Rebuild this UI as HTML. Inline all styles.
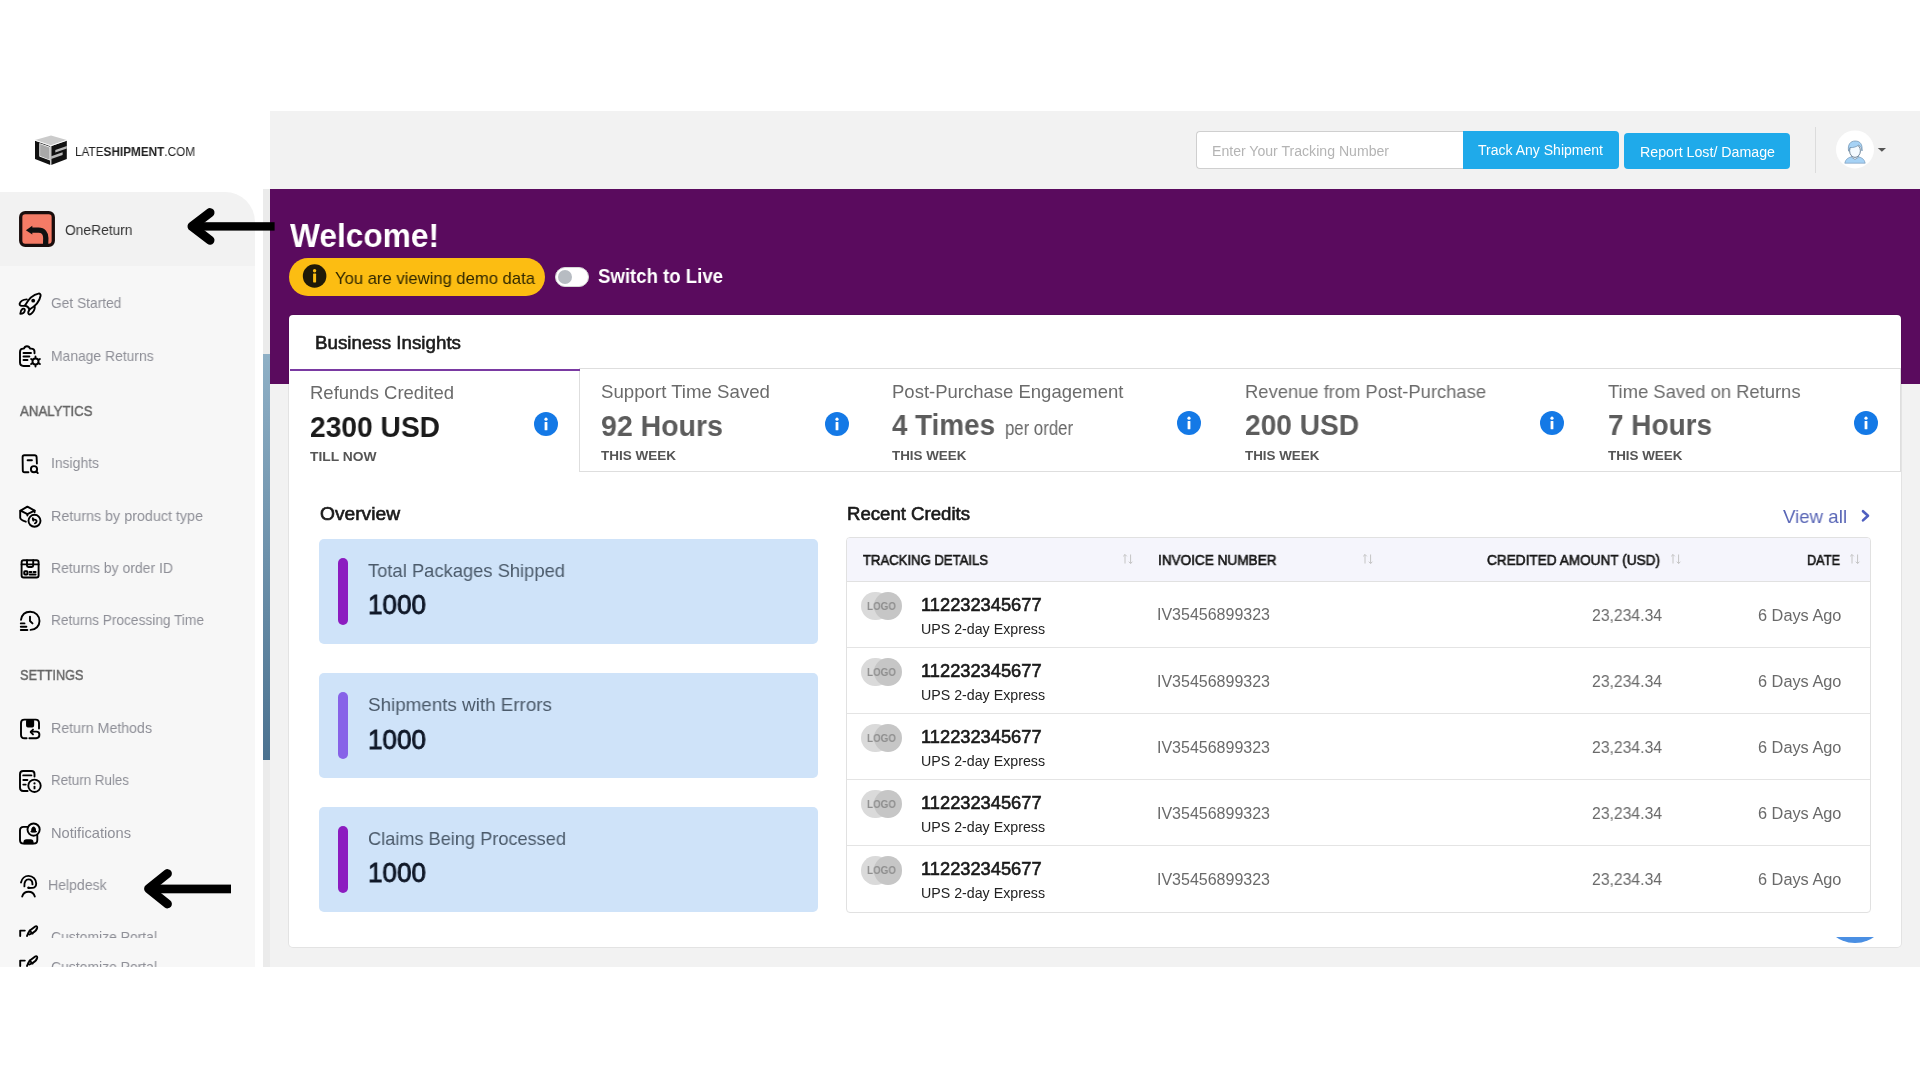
<!DOCTYPE html>
<html><head><meta charset="utf-8"><title>LateShipment OneReturn</title>
<style>
html,body{margin:0;padding:0;background:#fff;width:1920px;height:1080px;overflow:hidden;position:relative}
body{font-family:"Liberation Sans",sans-serif}
.abs{position:absolute}
.t{will-change:transform;position:absolute;white-space:nowrap;line-height:1.1171875;transform-origin:0 0}
.ic{fill:none;stroke:#000;stroke-width:1.9;stroke-linecap:round;stroke-linejoin:round}
</style></head><body>
<div class="abs" style="left:270px;top:111px;width:1650px;height:856px;background:#f2f2f2"></div><div class="abs" style="left:270px;top:189px;width:1650px;height:195px;background:#5a0b5e"></div><div class="abs" style="left:0;top:266px;width:255px;height:701px;background:#f7f7f7"></div><div class="abs" style="left:0;top:192px;width:255px;height:74px;background:#f2f2f2;border-top-right-radius:30px"></div><div class="abs" style="left:263px;top:189px;width:7px;height:778px;background:#ebebeb"></div><div class="abs" style="left:263px;top:354px;width:7px;height:406px;background:linear-gradient(#8fb0c6,#4b7290)"></div><svg class="abs" style="left:30px;top:132px" width="42" height="36" viewBox="30 132 42 36">
<polygon points="35,140 51,135.5 66.8,140 51,145.5" fill="#cbcbcb"/>
<polygon points="35,140.6 50.4,146 50.4,165 35,159" fill="#111"/>
<polygon points="51.2,146 66.8,140.6 66.8,159 51.2,165" fill="#111"/>
<polygon points="39.3,143 50,146.8 50,160.6 39.3,156.6" fill="#fff"/>
<polygon points="40.1,144 49.6,147.4 49.6,159.8 40.1,156" fill="#a8a8a8"/>
<polygon points="55.3,150 66.8,146 66.8,148.6 55.3,152.6" fill="#b8b8b8"/>
<polygon points="51.2,156.3 62.6,152.3 62.6,154.9 51.2,158.9" fill="#b8b8b8"/>
<line x1="35" y1="140.3" x2="50.8" y2="145.8" stroke="#fff" stroke-width="0.9"/>
<line x1="50.8" y1="145.8" x2="66.8" y2="140.3" stroke="#fff" stroke-width="0.9"/>
<line x1="50.8" y1="145.8" x2="50.8" y2="165" stroke="#ddd" stroke-width="0.9"/>
</svg><div class="t" id="t0" style="left:74.70px;top:146.00px;font-size:12.5px;color:#222;font-weight:400;transform:scaleX(0.9406);">LATE<b style="font-weight:700">SHIPMENT</b>.COM</div>
<svg class="abs" style="left:16px;top:208px" width="42" height="42" viewBox="16 208 42 42">
<rect x="20.7" y="212.7" width="32.6" height="32.6" rx="4.5" fill="#f57b66" stroke="#1a0d0d" stroke-width="3.3"/>
<path d="M32.3,225.8 L25.9,230.2 L32.3,234.6 Z" fill="#111"/>
<path d="M31.5,230.2 L38.5,230.2 C43.5,230.2 45.8,233.5 45.8,238 L45.6,245" fill="none" stroke="#111" stroke-width="5.3"/>
</svg><div class="t" id="t1" style="left:65.00px;top:222.00px;font-size:14.5px;color:#333;font-weight:400;transform:scaleX(0.9515);">OneReturn</div>
<svg class="abs" style="left:170px;top:200px" width="110" height="60" viewBox="170 200 110 60">
<polyline points="210,212.6 192,226.4 210,240.2" fill="none" stroke="#000" stroke-width="9" stroke-linecap="round" stroke-linejoin="round"/>
<rect x="192" y="222.2" width="82.6" height="8.4" fill="#000"/>
</svg><svg class="abs" style="left:130px;top:860px" width="110" height="60" viewBox="130 860 110 60">
<polyline points="167.5,873.5 148.5,888.8 167.5,904" fill="none" stroke="#000" stroke-width="8.8" stroke-linecap="round" stroke-linejoin="round"/>
<rect x="148" y="884.6" width="83" height="8.7" fill="#000"/>
</svg><svg class="abs ic" style="left:14px;top:288px" width="32" height="32" viewBox="0 0 32 32"><path d="M11,17.5 C14,12 19,6.5 24.5,5.6 C26,5.4 26.8,6.3 26.6,7.8 C25.5,13.5 21,18.5 15.5,21.5 C14.8,19.5 13,18 11,17.5 Z"/>
<path d="M12.8,11.4 C9.2,11.6 6.3,13.6 5.6,15.8 C5.3,17.3 6.8,18.2 11,17.8"/>
<path d="M20.8,19 C20.8,22 19,24.6 16.6,26.2 C15.2,26.9 13.8,25.6 14.3,24 L15.5,21.5"/>
<path d="M6.3,25.8 C6.5,23.5 7.4,21.6 8.5,20.9 C9.8,20.2 11,21 10.8,22.6 C10.4,24.6 8.5,25.8 6.3,25.8 Z"/>
<circle cx="19.2" cy="12.7" r="1.9" fill="#000" stroke="none"/></svg>
<div class="t" id="t2" style="left:50.80px;top:295.00px;font-size:14.5px;color:#8e8f97;font-weight:400;transform:scaleX(0.9493);">Get Started</div>
<svg class="abs ic" style="left:14px;top:340px" width="32" height="32" viewBox="0 0 32 32"><path d="M20.5,13.3 L20.5,11.6 C20.5,9.8 19,8.6 17.2,8.6 L16,8.6 C15.5,6.9 14.3,6.3 13,6.3 C11.7,6.3 10.5,6.9 10,8.6 L9.2,8.6 C7.3,8.6 6,10 6,12 L6,22.6 C6,24.8 7.4,26 9.5,26 L15.4,26"/>
<path d="M9.5,13 L17,13 M9.5,16.5 L15.4,16.5 M9.5,20 L13.5,20"/>
<path d="M21.5,16.5 L21.5,17.6 M21.5,25.4 L21.5,26.5 M17.1,19 L18.1,19.6 M24.9,23.4 L25.9,24 M17.1,24 L18.1,23.4 M24.9,19.6 L25.9,19"/>
<circle cx="21.5" cy="21.5" r="3"/></svg>
<div class="t" id="t3" style="left:51.00px;top:348.00px;font-size:14.5px;color:#8e8f97;font-weight:400;transform:scaleX(0.9571);">Manage Returns</div>
<div class="t" id="t4" style="left:19.70px;top:403.00px;font-size:14.5px;color:#666;font-weight:400;-webkit-text-stroke:0.45px #666;transform:scaleX(0.9130);">ANALYTICS</div>
<svg class="abs ic" style="left:14px;top:447px" width="32" height="32" viewBox="0 0 32 32"><path d="M22.9,16.5 L22.6,10 C22.5,8.9 21.7,8.3 20.6,8.3 L10.3,8.3 C9.3,8.3 8.6,9 8.6,10 L8.8,23.4 C8.8,24.5 9.5,25.2 10.6,25.2 L14.4,25.3"/>
<path d="M13.6,13.3 L17.9,13.3"/>
<circle cx="20" cy="22.2" r="3.1"/>
<path d="M22.3,24.5 L23.8,26.1"/></svg>
<div class="t" id="t5" style="left:51.00px;top:455.00px;font-size:14.5px;color:#8e8f97;font-weight:400;transform:scaleX(0.9603);">Insights</div>
<svg class="abs ic" style="left:14px;top:500px" width="32" height="32" viewBox="0 0 32 32"><path d="M6.6,10.6 L13.4,6.6 L20.6,10.6 L13.4,14.2 Z"/>
<path d="M6.2,10.8 L6.2,17.8 C6.2,19.5 7.5,20.3 11.8,21.7 M13.4,14.2 L13.4,15.6 M20.6,10.8 L20.6,12.3"/>
<circle cx="20.5" cy="20.8" r="6"/>
<path d="M19.4,19.4 L21.6,19.9 C23,20.4 23,22.7 20.9,23.3" />
<path d="M18.8,18.2 L19.3,20.6" /></svg>
<div class="t" id="t6" style="left:51.00px;top:508.00px;font-size:14.5px;color:#8e8f97;font-weight:400;transform:scaleX(0.9873);">Returns by product type</div>
<svg class="abs ic" style="left:14px;top:552px" width="32" height="32" viewBox="0 0 32 32"><rect x="7.6" y="8.2" width="17" height="17.3" rx="2"/>
<path d="M7.6,12.4 L24.6,12.4"/>
<path d="M13,8.2 L13,13.6 C13,14.6 13.6,15 14.4,15 L17.8,15 C18.6,15 19.2,14.6 19.2,13.6 L19.2,8.2"/>
<rect x="10.2" y="19.2" width="3.3" height="3.3" rx="0.8"/>
<path d="M15.6,20 L17.4,20 M19.6,20 L21.6,20 M15.6,22.5 L21.6,22.5"/></svg>
<div class="t" id="t7" style="left:51.00px;top:560.00px;font-size:14.5px;color:#8e8f97;font-weight:400;transform:scaleX(0.9642);">Returns by order ID</div>
<svg class="abs ic" style="left:14px;top:604px" width="32" height="32" viewBox="0 0 32 32"><path d="M7,15.8 C7.8,10.7 11.4,7.7 16.2,7.7 C21.5,7.7 25.5,11.7 25.5,17 C25.5,22 21.8,25.6 16.6,25.9"/>
<path d="M16,12.6 L16,17 L18.5,19.4"/>
<path d="M6.8,19.4 L10.5,19.4 M6.8,22.7 L12.4,22.7 M6.8,26 L13.4,26"/></svg>
<div class="t" id="t8" style="left:51.00px;top:612.00px;font-size:14.5px;color:#8e8f97;font-weight:400;transform:scaleX(0.9445);">Returns Processing Time</div>
<div class="t" id="t9" style="left:19.60px;top:667.00px;font-size:14.5px;color:#666;font-weight:400;-webkit-text-stroke:0.45px #666;transform:scaleX(0.8757);">SETTINGS</div>
<svg class="abs ic" style="left:14px;top:712px" width="32" height="32" viewBox="0 0 32 32"><path d="M25,16.5 L25,11 C25,8.9 23.7,7.6 21.8,7.6 L10.4,7.6 C8.4,7.6 7,9 7,11 L7,22.7 C7,24.8 8.4,26.2 10.4,26.2 L12.6,26.2"/>
<rect x="13" y="8.2" width="6.2" height="6.3" rx="0.9" fill="#000"/>
<path d="M15.4,26.2 L22.2,26.2 C24.2,26.2 25.4,24.8 25.4,22.8 C25.4,20.9 24.1,19.6 22.3,19.6 L17,19.6"/>
<path d="M19,17.6 L16.7,20 L19,22.4"/></svg>
<div class="t" id="t10" style="left:51.00px;top:720.00px;font-size:14.5px;color:#8e8f97;font-weight:400;transform:scaleX(0.9789);">Return Methods</div>
<svg class="abs ic" style="left:14px;top:764px" width="32" height="32" viewBox="0 0 32 32"><path d="M20.5,12.6 L20.5,10 C20.5,8.2 19.3,7 17.5,7 L9.2,7 C7.3,7 6,8.3 6,10.2 L6,23.8 C6,25.8 7.3,27 9.2,27 L13.6,27"/>
<path d="M9.2,11.4 L17.4,11.4 M9.3,16 L13.4,16 M9.3,20.6 L11.7,20.6"/>
<circle cx="20.5" cy="21.8" r="6.2"/>
<path d="M20.5,22.6 L20.5,24.4"/>
<circle cx="20.5" cy="19.4" r="1.1" fill="#000" stroke="none"/></svg>
<div class="t" id="t11" style="left:51.00px;top:772.00px;font-size:14.5px;color:#8e8f97;font-weight:400;transform:scaleX(0.9217);">Return Rules</div>
<svg class="abs ic" style="left:14px;top:816px" width="32" height="32" viewBox="0 0 32 32"><path d="M13.6,10.9 L9.6,10.9 C7.5,10.9 6,12.4 6,14.5 L6,23.9 C6,26 7.5,27.5 9.6,27.5 L19.8,27.5 C21.8,27.5 23.3,26 23.3,23.9 L23.3,19.6"/>
<circle cx="19.6" cy="13.6" r="6.1"/>
<path d="M17.6,15.6 L17.9,12.8 C18,11.6 18.8,11 19.6,11 C20.4,11 21.2,11.6 21.3,12.8 L21.6,15.6 Z" fill="#000" stroke-width="1"/>
<path d="M17,15.6 L22.4,15.6" stroke-width="1.2"/>
<path d="M10.4,27.4 L10.4,26.2 C10.4,25 11.3,24.2 12.5,24.2 L16.5,24.2 C17.6,24.2 18.6,25 18.6,26.2 L18.6,27.4 Z" fill="#000"/></svg>
<div class="t" id="t12" style="left:51.00px;top:825.00px;font-size:14.5px;color:#8e8f97;font-weight:400;transform:scaleX(1.0129);">Notifications</div>
<svg class="abs ic" style="left:14px;top:869px" width="32" height="32" viewBox="0 0 32 32"><path d="M7,13.5 C7.8,9.4 11,6.9 14.5,6.9 C18.9,6.9 22.2,10.4 22.2,14.6 C22.2,17 20.6,18.9 18.4,18.9 L14.4,19"/>
<path d="M10.4,17.4 C10,13.2 11.8,10.4 14.5,10.4 C17,10.4 18.5,12.4 18.5,15.4"/>
<circle cx="14.6" cy="18.6" r="1.2" fill="#000" stroke="none"/>
<path d="M8.2,27.6 C9.1,24.6 11.5,22.8 14.5,22.8 C17.5,22.8 19.9,24.6 20.8,27.6"/></svg>
<div class="t" id="t13" style="left:48.20px;top:877.00px;font-size:14.5px;color:#8e8f97;font-weight:400;transform:scaleX(0.9693);">Helpdesk</div>
<div class="abs" style="left:0;top:920px;width:255px;height:17.5px;overflow:hidden"><svg class="abs ic" style="left:14px;top:-2px" width="32" height="32" viewBox="0 0 32 32"><path d="M6.2,18 L6.2,12.6 L10.8,12.6"/><path d="M13,18 C13.5,15.5 15,13.5 16.5,12 L21.2,8.5 C22.2,7.8 23.4,8.4 23.2,9.7 C22.8,11.5 21,13.6 18.8,14.8 L15.5,16.5"/><path d="M15.6,12.6 L18.6,15.6"/></svg><div class="t" id="t14" style="left:50.80px;top:9.00px;font-size:14.5px;color:#8e8f97;font-weight:400;transform:scaleX(0.9601);">Customize Portal</div>
</div><div class="abs" style="left:0;top:950px;width:255px;height:17px;overflow:hidden"><svg class="abs ic" style="left:14px;top:-2.5px" width="32" height="32" viewBox="0 0 32 32"><path d="M6.2,18 L6.2,12.6 L10.8,12.6"/><path d="M13,18 C13.5,15.5 15,13.5 16.5,12 L21.2,8.5 C22.2,7.8 23.4,8.4 23.2,9.7 C22.8,11.5 21,13.6 18.8,14.8 L15.5,16.5"/><path d="M15.6,12.6 L18.6,15.6"/></svg><div class="t" id="t15" style="left:50.80px;top:9.00px;font-size:14.5px;color:#8e8f97;font-weight:400;transform:scaleX(0.9601);">Customize Portal</div>
</div><div class="abs" style="left:1196px;top:131px;width:267px;height:38px;background:#fff;border:1px solid #cfcfcf;border-right:none;border-radius:4px 0 0 4px;box-sizing:border-box"></div><div class="t" id="t16" style="left:1212.40px;top:144.00px;font-size:14px;color:#b4b4b4;font-weight:400;transform:scaleX(1.0064);">Enter Your Tracking Number</div>
<div class="abs" style="left:1463px;top:131px;width:155.5px;height:37.5px;background:#1faaea;border-radius:0 4px 4px 0"></div><div class="t" id="t17" style="left:1478.40px;top:143.00px;font-size:14px;color:#fff;font-weight:400;transform:scaleX(1.0019);">Track Any Shipment</div>
<div class="abs" style="left:1624px;top:133px;width:166px;height:35.5px;background:#1faaea;border-radius:4px"></div><div class="t" id="t18" style="left:1640.00px;top:145.00px;font-size:14px;color:#fff;font-weight:400;transform:scaleX(1.0144);">Report Lost/ Damage</div>
<div class="abs" style="left:1815px;top:127px;width:1px;height:46px;background:#dcdcdc"></div><svg class="abs" style="left:1830px;top:124px" width="64" height="52" viewBox="1830 124 64 52">
<circle cx="1855" cy="149.4" r="19" fill="#fff"/>
<path d="M1844.8,163.2 C1845.4,159.4 1848,157.6 1851.6,156.8 L1855,159 L1858.4,156.8 C1862,157.6 1864.6,159.4 1865.2,163.2 Z" fill="#a6d2f5" stroke="#7f9fbd" stroke-width="0.7" stroke-linejoin="round"/>
<path d="M1851.6,155.6 L1851.8,157.4 L1855,159.4 L1858.2,157.4 L1858.4,155.6" fill="#f4faff" stroke="#5f7a95" stroke-width="0.6"/>
<ellipse cx="1855" cy="150.8" rx="5.4" ry="6.6" fill="#f4faff" stroke="#4f6880" stroke-width="0.8"/>
<path d="M1848.6,151.2 C1847.4,144.6 1850.4,141 1855.2,141 C1860,141 1862.8,144.2 1862,151 C1861.6,148 1860.6,146.2 1858.8,145 C1856.6,146.8 1853.2,147.8 1849.8,147.6 Z" fill="#a6d2f5" stroke="#6e8fae" stroke-width="0.7" stroke-linejoin="round"/>
<polygon points="1877.8,148 1886,148 1881.9,151.8" fill="#555"/>
</svg><div class="t" id="t19" style="left:290.00px;top:216.00px;font-size:34px;color:#fff;font-weight:700;transform:scaleX(0.9313);">Welcome!</div>
<div class="abs" style="left:289px;top:257.6px;width:256px;height:38.7px;background:#fcbd12;border-radius:20px"></div><svg class="abs" style="left:302px;top:264px" width="26" height="26" viewBox="0 0 26 26">
<circle cx="12.6" cy="12" r="11.8" fill="#1f1a08"/>
<circle cx="12.6" cy="6.8" r="1.7" fill="#fcbd12"/>
<rect x="11.1" y="9.6" width="3" height="8.8" rx="0.6" fill="#fcbd12"/>
</svg><div class="t" id="t20" style="left:334.70px;top:269.00px;font-size:17px;color:#2f2700;font-weight:400;transform:scaleX(0.9781);">You are viewing demo data</div>
<div class="abs" style="left:555px;top:267px;width:33.5px;height:19.7px;background:#fff;border-radius:10px;box-sizing:border-box;border:1px solid #d6d6d6"></div><div class="abs" style="left:557.5px;top:269.5px;width:14.5px;height:14.5px;background:#b7bcc2;border-radius:50%"></div><div class="t" id="t21" style="left:598.00px;top:266.00px;font-size:19.5px;color:#fff;font-weight:700;transform:scaleX(0.9534);">Switch to Live</div>
<div class="abs" style="left:289px;top:315px;width:1612px;height:632px;background:#fff;border-radius:4px;box-shadow:0 0 0 1px rgba(0,0,0,0.06)"></div><div class="t" id="t22" style="left:315.40px;top:333.00px;font-size:18.5px;color:#1c1c1c;font-weight:400;-webkit-text-stroke:0.6px #1c1c1c;transform:scaleX(1.0141);">Business Insights</div>
<div class="abs" style="left:579px;top:368px;width:1322px;height:104px;border:1px solid #dedede;border-right:1px solid #dedede;box-sizing:border-box"></div><div class="abs" style="left:290px;top:368.5px;width:289.5px;height:2.5px;background:#7a3aa2"></div><div class="t" id="t23" style="left:310.40px;top:383.00px;font-size:18.5px;color:#6b6b6b;font-weight:400;transform:scaleX(1.0001);">Refunds Credited</div>
<div class="t" id="t24" style="left:310.40px;top:411.00px;font-size:29.5px;color:#1a1a1a;font-weight:700;transform:scaleX(0.9551);">2300 USD</div>
<div class="t" id="t25" style="left:310.40px;top:450.00px;font-size:13.4px;color:#555;font-weight:700;transform:scaleX(1.0315);">TILL NOW</div>
<svg class="abs" style="left:533.2px;top:411.4px" width="26" height="26" viewBox="0 0 26 26">
<circle cx="13" cy="13" r="12" fill="#1479e6"/><circle cx="13" cy="8.2" r="1.6" fill="#fff"/><rect x="11.6" y="11" width="2.8" height="8.2" rx="0.5" fill="#fff"/></svg><div class="t" id="t26" style="left:601.20px;top:382.00px;font-size:18.5px;color:#6b6b6b;font-weight:400;transform:scaleX(1.0082);">Support Time Saved</div>
<div class="t" id="t27" style="left:601.20px;top:410.00px;font-size:29.5px;color:#5c5c5c;font-weight:700;transform:scaleX(0.9663);">92 Hours</div>
<div class="t" id="t28" style="left:601.20px;top:449.00px;font-size:13.4px;color:#555;font-weight:700;transform:scaleX(1.0080);">THIS WEEK</div>
<svg class="abs" style="left:824px;top:410.5px" width="26" height="26" viewBox="0 0 26 26">
<circle cx="13" cy="13" r="12" fill="#1479e6"/><circle cx="13" cy="8.2" r="1.6" fill="#fff"/><rect x="11.6" y="11" width="2.8" height="8.2" rx="0.5" fill="#fff"/></svg><div class="t" id="t29" style="left:892.00px;top:382.00px;font-size:18.5px;color:#6b6b6b;font-weight:400;transform:scaleX(0.9983);">Post-Purchase Engagement</div>
<div class="t" id="t30" style="left:892.00px;top:409.00px;font-size:29.5px;color:#5c5c5c;font-weight:700;transform:scaleX(0.9420);">4 Times</div>
<div class="t" id="t31" style="left:892.00px;top:449.00px;font-size:13.4px;color:#555;font-weight:700;transform:scaleX(0.9999);">THIS WEEK</div>
<svg class="abs" style="left:1176px;top:410.3px" width="26" height="26" viewBox="0 0 26 26">
<circle cx="13" cy="13" r="12" fill="#1479e6"/><circle cx="13" cy="8.2" r="1.6" fill="#fff"/><rect x="11.6" y="11" width="2.8" height="8.2" rx="0.5" fill="#fff"/></svg><div class="t" id="t32" style="left:1244.80px;top:382.00px;font-size:18.5px;color:#6b6b6b;font-weight:400;transform:scaleX(0.9931);">Revenue from Post-Purchase</div>
<div class="t" id="t33" style="left:1244.80px;top:409.00px;font-size:29.5px;color:#5c5c5c;font-weight:700;transform:scaleX(0.9524);">200 USD</div>
<div class="t" id="t34" style="left:1244.80px;top:449.00px;font-size:13.4px;color:#555;font-weight:700;transform:scaleX(0.9999);">THIS WEEK</div>
<svg class="abs" style="left:1539px;top:410.3px" width="26" height="26" viewBox="0 0 26 26">
<circle cx="13" cy="13" r="12" fill="#1479e6"/><circle cx="13" cy="8.2" r="1.6" fill="#fff"/><rect x="11.6" y="11" width="2.8" height="8.2" rx="0.5" fill="#fff"/></svg><div class="t" id="t35" style="left:1607.50px;top:382.00px;font-size:18.5px;color:#6b6b6b;font-weight:400;transform:scaleX(0.9940);">Time Saved on Returns</div>
<div class="t" id="t36" style="left:1607.50px;top:409.00px;font-size:29.5px;color:#5c5c5c;font-weight:700;transform:scaleX(0.9468);">7 Hours</div>
<div class="t" id="t37" style="left:1607.50px;top:449.00px;font-size:13.4px;color:#555;font-weight:700;transform:scaleX(0.9999);">THIS WEEK</div>
<svg class="abs" style="left:1853px;top:410.3px" width="26" height="26" viewBox="0 0 26 26">
<circle cx="13" cy="13" r="12" fill="#1479e6"/><circle cx="13" cy="8.2" r="1.6" fill="#fff"/><rect x="11.6" y="11" width="2.8" height="8.2" rx="0.5" fill="#fff"/></svg><div class="t" id="t38" style="left:1004.80px;top:418.00px;font-size:19.5px;color:#666;font-weight:400;transform:scaleX(0.8594);">per order</div>
<div class="t" id="t39" style="left:319.60px;top:505.00px;font-size:17.5px;color:#1a1a1a;font-weight:400;-webkit-text-stroke:0.6px #1a1a1a;transform:scaleX(1.0968);">Overview</div>
<div class="abs" style="left:319px;top:539px;width:498.5px;height:104.5px;background:#cfe3f9;border-radius:5px"></div><div class="abs" style="left:338px;top:558px;width:10.3px;height:66.6px;background:#8c1cc0;border-radius:6px"></div><div class="t" id="t40" style="left:367.80px;top:560.00px;font-size:19px;color:#4b5a6a;font-weight:400;transform:scaleX(0.9663);">Total Packages Shipped</div>
<div class="t" id="t41" style="left:367.80px;top:589.00px;font-size:28.5px;color:#101828;font-weight:400;-webkit-text-stroke:0.9px #101828;transform:scaleX(0.9147);">1000</div>
<div class="abs" style="left:319px;top:673.3px;width:498.5px;height:104.5px;background:#cfe3f9;border-radius:5px"></div><div class="abs" style="left:338px;top:692.3px;width:10.3px;height:66.6px;background:#8762e8;border-radius:6px"></div><div class="t" id="t42" style="left:367.80px;top:694.00px;font-size:19px;color:#4b5a6a;font-weight:400;transform:scaleX(0.9901);">Shipments with Errors</div>
<div class="t" id="t43" style="left:367.80px;top:724.00px;font-size:28.5px;color:#101828;font-weight:400;-webkit-text-stroke:0.9px #101828;transform:scaleX(0.9147);">1000</div>
<div class="abs" style="left:319px;top:807.2px;width:498.5px;height:104.5px;background:#cfe3f9;border-radius:5px"></div><div class="abs" style="left:338px;top:826.2px;width:10.3px;height:66.6px;background:#8c1cc0;border-radius:6px"></div><div class="t" id="t44" style="left:367.80px;top:828.00px;font-size:19px;color:#4b5a6a;font-weight:400;transform:scaleX(0.9566);">Claims Being Processed</div>
<div class="t" id="t45" style="left:367.80px;top:857.00px;font-size:28.5px;color:#101828;font-weight:400;-webkit-text-stroke:0.9px #101828;transform:scaleX(0.9147);">1000</div>
<div class="t" id="t46" style="left:847.40px;top:505.00px;font-size:17.5px;color:#1a1a1a;font-weight:400;-webkit-text-stroke:0.6px #1a1a1a;transform:scaleX(1.0626);">Recent Credits</div>
<div class="t" id="t47" style="left:1782.50px;top:506.00px;font-size:19px;color:#5966b6;font-weight:400;transform:scaleX(0.9825);">View all</div>
<svg class="abs" style="left:1858px;top:506px" width="16" height="20" viewBox="0 0 16 20"><polyline points="5,5.2 10,9.8 5,14.4" fill="none" stroke="#4f5fc0" stroke-width="2.6" stroke-linecap="round" stroke-linejoin="round"/></svg><div class="abs" style="left:846px;top:537px;width:1025px;height:376px;border:1px solid #e1e1e1;border-radius:4px;box-sizing:border-box;overflow:hidden"><div class="abs" style="left:0;top:0;width:1025px;height:44px;background:#f5f5fc;border-bottom:1px solid #e1e1e1;box-sizing:border-box"></div></div><div class="t" id="t48" style="left:863.00px;top:553.00px;font-size:14px;color:#161616;font-weight:400;-webkit-text-stroke:0.6px #161616;transform:scaleX(0.9360);">TRACKING DETAILS</div>
<svg class="abs" style="left:1121.5px;top:553px" width="12" height="12" viewBox="0 0 12 12"><path d="M3,10.5 L3,1.5 M1.2,3.3 L3,1.5 L4.8,3.3 M8.6,1.5 L8.6,10.5 M6.8,8.7 L8.6,10.5 L10.4,8.7" fill="none" stroke="#c4c4c4" stroke-width="1"/></svg><div class="t" id="t49" style="left:1157.60px;top:553.00px;font-size:14px;color:#161616;font-weight:400;-webkit-text-stroke:0.6px #161616;transform:scaleX(0.9703);">INVOICE NUMBER</div>
<svg class="abs" style="left:1361.5px;top:553px" width="12" height="12" viewBox="0 0 12 12"><path d="M3,10.5 L3,1.5 M1.2,3.3 L3,1.5 L4.8,3.3 M8.6,1.5 L8.6,10.5 M6.8,8.7 L8.6,10.5 L10.4,8.7" fill="none" stroke="#c4c4c4" stroke-width="1"/></svg><div class="t" id="t50" style="left:1487.00px;top:553.00px;font-size:14px;color:#161616;font-weight:400;-webkit-text-stroke:0.6px #161616;transform:scaleX(0.9727);">CREDITED AMOUNT (USD)</div>
<svg class="abs" style="left:1670px;top:553px" width="12" height="12" viewBox="0 0 12 12"><path d="M3,10.5 L3,1.5 M1.2,3.3 L3,1.5 L4.8,3.3 M8.6,1.5 L8.6,10.5 M6.8,8.7 L8.6,10.5 L10.4,8.7" fill="none" stroke="#c4c4c4" stroke-width="1"/></svg><div class="t" id="t51" style="left:1806.50px;top:553.00px;font-size:14px;color:#161616;font-weight:400;-webkit-text-stroke:0.6px #161616;transform:scaleX(0.9088);">DATE</div>
<svg class="abs" style="left:1849px;top:553px" width="12" height="12" viewBox="0 0 12 12"><path d="M3,10.5 L3,1.5 M1.2,3.3 L3,1.5 L4.8,3.3 M8.6,1.5 L8.6,10.5 M6.8,8.7 L8.6,10.5 L10.4,8.7" fill="none" stroke="#c4c4c4" stroke-width="1"/></svg><div class="abs" style="left:847px;top:646.9px;width:1023px;height:1px;background:#e4e4e4"></div><div class="abs" style="left:861px;top:591.6px;width:28.5px;height:28.5px;border-radius:50%;background:#dadada"></div><div class="abs" style="left:873.5px;top:591.6px;width:28.5px;height:28.5px;border-radius:50%;background:#c6c6c6"></div><div class="t" id="t52" style="left:866.50px;top:601.00px;font-size:10.5px;color:#8f8f8f;font-weight:700;transform:scaleX(0.9378);">LOGO</div>
<div class="t" id="t53" style="left:921.10px;top:596.00px;font-size:17.5px;color:#1a1a1a;font-weight:400;-webkit-text-stroke:0.6px #1a1a1a;transform:scaleX(1.0442);">112232345677</div>
<div class="t" id="t54" style="left:921.10px;top:622.00px;font-size:14.2px;color:#222;font-weight:400;transform:scaleX(1.0016);">UPS 2-day Express</div>
<div class="t" id="t55" style="left:1157.20px;top:606.00px;font-size:16px;color:#6a6a6a;font-weight:400;transform:scaleX(1.0000);">IV35456899323</div>
<div class="t" id="t56" style="left:1591.60px;top:607.00px;font-size:16px;color:#6a6a6a;font-weight:400;transform:scaleX(0.9833);">23,234.34</div>
<div class="t" id="t57" style="left:1757.60px;top:607.00px;font-size:16px;color:#6a6a6a;font-weight:400;transform:scaleX(1.0192);">6 Days Ago</div>
<div class="abs" style="left:847px;top:713.0px;width:1023px;height:1px;background:#e4e4e4"></div><div class="abs" style="left:861px;top:657.7px;width:28.5px;height:28.5px;border-radius:50%;background:#dadada"></div><div class="abs" style="left:873.5px;top:657.7px;width:28.5px;height:28.5px;border-radius:50%;background:#c6c6c6"></div><div class="t" id="t58" style="left:866.50px;top:667.00px;font-size:10.5px;color:#8f8f8f;font-weight:700;transform:scaleX(0.9378);">LOGO</div>
<div class="t" id="t59" style="left:921.10px;top:662.00px;font-size:17.5px;color:#1a1a1a;font-weight:400;-webkit-text-stroke:0.6px #1a1a1a;transform:scaleX(1.0442);">112232345677</div>
<div class="t" id="t60" style="left:921.10px;top:688.00px;font-size:14.2px;color:#222;font-weight:400;transform:scaleX(1.0016);">UPS 2-day Express</div>
<div class="t" id="t61" style="left:1157.20px;top:673.00px;font-size:16px;color:#6a6a6a;font-weight:400;transform:scaleX(1.0000);">IV35456899323</div>
<div class="t" id="t62" style="left:1591.60px;top:673.00px;font-size:16px;color:#6a6a6a;font-weight:400;transform:scaleX(0.9833);">23,234.34</div>
<div class="t" id="t63" style="left:1757.60px;top:673.00px;font-size:16px;color:#6a6a6a;font-weight:400;transform:scaleX(1.0192);">6 Days Ago</div>
<div class="abs" style="left:847px;top:779.1px;width:1023px;height:1px;background:#e4e4e4"></div><div class="abs" style="left:861px;top:723.8px;width:28.5px;height:28.5px;border-radius:50%;background:#dadada"></div><div class="abs" style="left:873.5px;top:723.8px;width:28.5px;height:28.5px;border-radius:50%;background:#c6c6c6"></div><div class="t" id="t64" style="left:866.50px;top:733.00px;font-size:10.5px;color:#8f8f8f;font-weight:700;transform:scaleX(0.9378);">LOGO</div>
<div class="t" id="t65" style="left:921.10px;top:728.00px;font-size:17.5px;color:#1a1a1a;font-weight:400;-webkit-text-stroke:0.6px #1a1a1a;transform:scaleX(1.0442);">112232345677</div>
<div class="t" id="t66" style="left:921.10px;top:754.00px;font-size:14.2px;color:#222;font-weight:400;transform:scaleX(1.0016);">UPS 2-day Express</div>
<div class="t" id="t67" style="left:1157.20px;top:739.00px;font-size:16px;color:#6a6a6a;font-weight:400;transform:scaleX(1.0000);">IV35456899323</div>
<div class="t" id="t68" style="left:1591.60px;top:739.00px;font-size:16px;color:#6a6a6a;font-weight:400;transform:scaleX(0.9833);">23,234.34</div>
<div class="t" id="t69" style="left:1757.60px;top:739.00px;font-size:16px;color:#6a6a6a;font-weight:400;transform:scaleX(1.0192);">6 Days Ago</div>
<div class="abs" style="left:847px;top:845.2px;width:1023px;height:1px;background:#e4e4e4"></div><div class="abs" style="left:861px;top:789.9px;width:28.5px;height:28.5px;border-radius:50%;background:#dadada"></div><div class="abs" style="left:873.5px;top:789.9px;width:28.5px;height:28.5px;border-radius:50%;background:#c6c6c6"></div><div class="t" id="t70" style="left:866.50px;top:799.00px;font-size:10.5px;color:#8f8f8f;font-weight:700;transform:scaleX(0.9378);">LOGO</div>
<div class="t" id="t71" style="left:921.10px;top:794.00px;font-size:17.5px;color:#1a1a1a;font-weight:400;-webkit-text-stroke:0.6px #1a1a1a;transform:scaleX(1.0442);">112232345677</div>
<div class="t" id="t72" style="left:921.10px;top:820.00px;font-size:14.2px;color:#222;font-weight:400;transform:scaleX(1.0016);">UPS 2-day Express</div>
<div class="t" id="t73" style="left:1157.20px;top:805.00px;font-size:16px;color:#6a6a6a;font-weight:400;transform:scaleX(1.0000);">IV35456899323</div>
<div class="t" id="t74" style="left:1591.60px;top:805.00px;font-size:16px;color:#6a6a6a;font-weight:400;transform:scaleX(0.9833);">23,234.34</div>
<div class="t" id="t75" style="left:1757.60px;top:805.00px;font-size:16px;color:#6a6a6a;font-weight:400;transform:scaleX(1.0192);">6 Days Ago</div>
<div class="abs" style="left:861px;top:856.0px;width:28.5px;height:28.5px;border-radius:50%;background:#dadada"></div><div class="abs" style="left:873.5px;top:856.0px;width:28.5px;height:28.5px;border-radius:50%;background:#c6c6c6"></div><div class="t" id="t76" style="left:866.50px;top:865.00px;font-size:10.5px;color:#8f8f8f;font-weight:700;transform:scaleX(0.9378);">LOGO</div>
<div class="t" id="t77" style="left:921.10px;top:860.00px;font-size:17.5px;color:#1a1a1a;font-weight:400;-webkit-text-stroke:0.6px #1a1a1a;transform:scaleX(1.0442);">112232345677</div>
<div class="t" id="t78" style="left:921.10px;top:886.00px;font-size:14.2px;color:#222;font-weight:400;transform:scaleX(1.0016);">UPS 2-day Express</div>
<div class="t" id="t79" style="left:1157.20px;top:871.00px;font-size:16px;color:#6a6a6a;font-weight:400;transform:scaleX(1.0000);">IV35456899323</div>
<div class="t" id="t80" style="left:1591.60px;top:871.00px;font-size:16px;color:#6a6a6a;font-weight:400;transform:scaleX(0.9833);">23,234.34</div>
<div class="t" id="t81" style="left:1757.60px;top:871.00px;font-size:16px;color:#6a6a6a;font-weight:400;transform:scaleX(1.0192);">6 Days Ago</div>
<div class="abs" style="left:1830px;top:937px;width:50px;height:6px;overflow:hidden"><div style="position:absolute;left:-8.4px;top:-60px;width:66px;height:66px;border-radius:50%;background:#4a8fe3"></div></div>
</body></html>
